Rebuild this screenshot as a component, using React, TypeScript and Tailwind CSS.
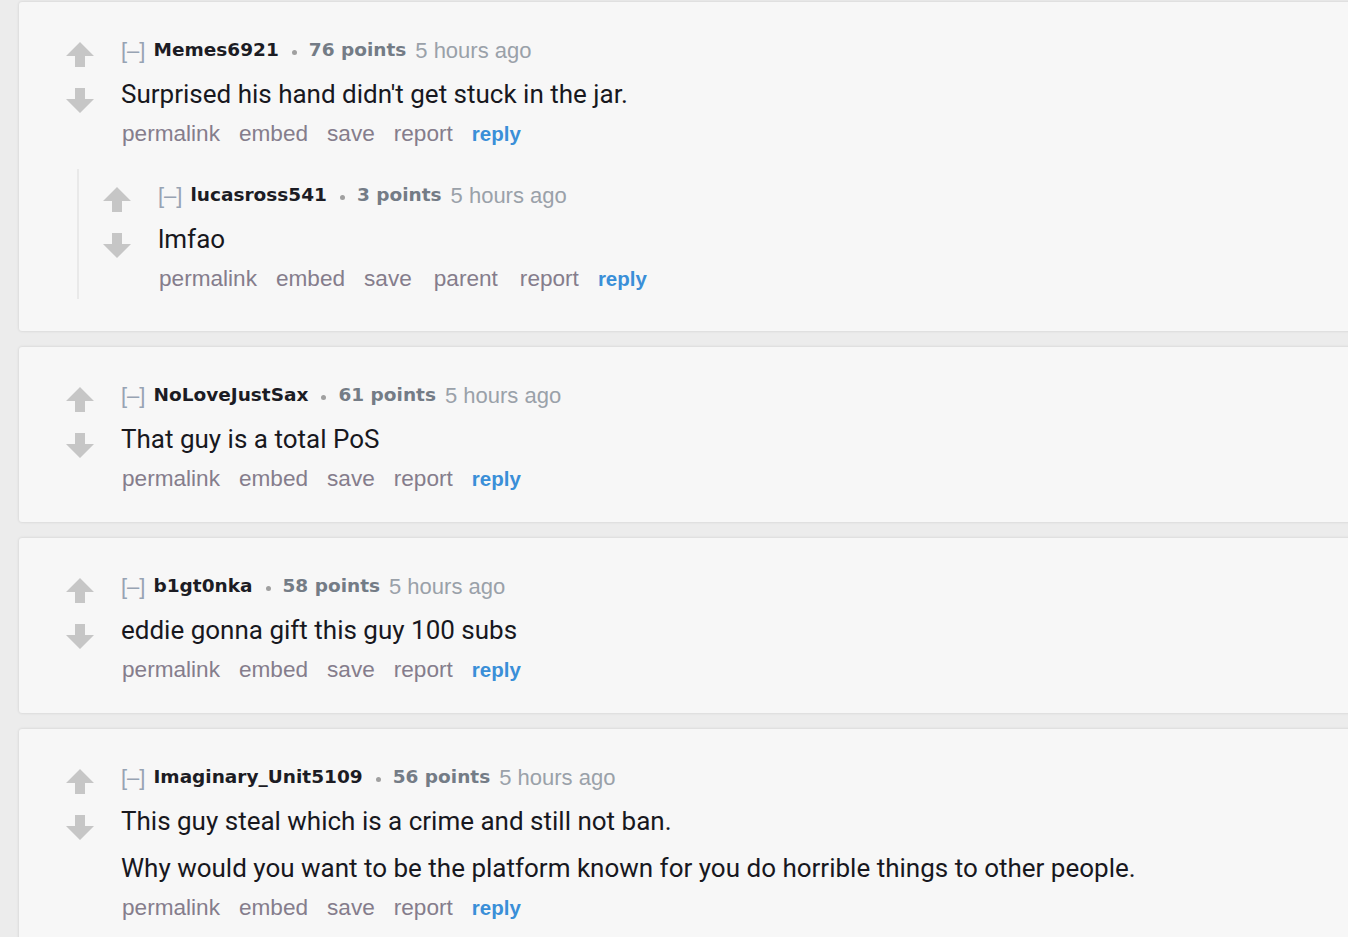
import React from 'react';

interface Reply {
  user: string;
  points: number;
  age: string;
  body: string[];
  parent?: boolean;
}

interface Comment extends Reply {
  children?: Reply[];
}

const comments: Comment[] = [
  {
    user: 'Memes6921',
    points: 76,
    age: '5 hours ago',
    body: ["Surprised his hand didn't get stuck in the jar."],
    children: [
      { user: 'lucasross541', points: 3, age: '5 hours ago', body: ['lmfao'], parent: true }
    ]
  },
  { user: 'NoLoveJustSax', points: 61, age: '5 hours ago', body: ['That guy is a total PoS'] },
  { user: 'b1gt0nka', points: 58, age: '5 hours ago', body: ['eddie gonna gift this guy 100 subs'] },
  {
    user: 'Imaginary_Unit5109',
    points: 56,
    age: '5 hours ago',
    body: [
      'This guy steal which is a crime and still not ban.',
      'Why would you want to be the platform known for you do horrible things to other people.'
    ]
  }
];

function Arrows() {
  return (
    <div className="flex flex-col items-center w-[28px] shrink-0 pt-[7px] gap-[21px]">
      <svg width="28" height="25" viewBox="0 0 28 25">
        <path d="M14 0 L28 14 L19 14 L19 25 L9 25 L9 14 L0 14 Z" fill="#c6c6c6" />
      </svg>
      <svg width="28" height="25" viewBox="0 0 28 25">
        <path d="M9 0 L19 0 L19 11 L28 11 L14 25 L0 11 L9 11 Z" fill="#c6c6c6" />
      </svg>
    </div>
  );
}

function Entry({ c }: { c: Reply }) {
  return (
    <div className="flex gap-[27px]">
      <Arrows />
      <div className="flex flex-col">
        {/* tagline */}
        <div className="flex items-center h-[30px] whitespace-nowrap">
          <span className="font-['Liberation_Sans',Arial,sans-serif] text-[22px] text-[#97a3b3]">[–]</span>
          <span className="ml-[8px] font-['DejaVu_Sans',Verdana,sans-serif] font-bold text-[18.5px] text-[#1c1c24]">
            {c.user}
          </span>
          <span className="ml-[13px] mr-[12px] mt-[4px] w-[5px] h-[5px] rounded-full bg-[#a0a0a0]" />
          <span className="font-['DejaVu_Sans',Verdana,sans-serif] font-bold text-[18.5px] text-[#747c86]">
            {c.points} points
          </span>
          <span className="ml-[9px] font-['Liberation_Sans',Arial,sans-serif] text-[22px] text-[#9aa1a9]">
            {c.age}
          </span>
        </div>
        {/* body */}
        <div className="mt-[11px] flex flex-col gap-[11px] font-['Roboto',sans-serif] text-[26px] leading-[36px] text-[#18181e]">
          {c.body.map((p) => (
            <p key={p}>{p}</p>
          ))}
        </div>
        {/* buttons */}
        <div className="mt-[7px] flex items-center gap-[19px] h-[30px] font-['Liberation_Sans',Arial,sans-serif] text-[22.6px] text-[#857d8c]">
          <span className="ml-[1px]">permalink</span>
          <span>embed</span>
          <span>save</span>
          {c.parent && <span className="mx-[3px]">parent</span>}
          <span>report</span>
          <span className="font-bold text-[20.5px] text-[#3a8fd8]">reply</span>
        </div>
      </div>
    </div>
  );
}

export default function App() {
  return (
    <div className="min-h-screen bg-[#ececec] overflow-hidden pt-[2px] pl-[19px]">
      <div className="flex flex-col gap-[16px] mr-[-12px]">
        {comments.map((c) => (
          <div
            key={c.user}
            className="bg-[#f7f7f7] rounded-[3px] shadow-[0_0_3px_rgba(0,0,0,0.14)] pl-[47px] pt-[33px] pb-[28px]"
          >
            <Entry c={c} />
            {c.children && (
              <div className="ml-[11px] mt-[20px] mb-[4px] border-l-2 border-[#e9e9e9] pl-[24px] pt-[11px] pb-[5px]">
                {c.children.map((r) => (
                  <Entry key={r.user} c={r} />
                ))}
              </div>
            )}
          </div>
        ))}
      </div>
    </div>
  );
}
